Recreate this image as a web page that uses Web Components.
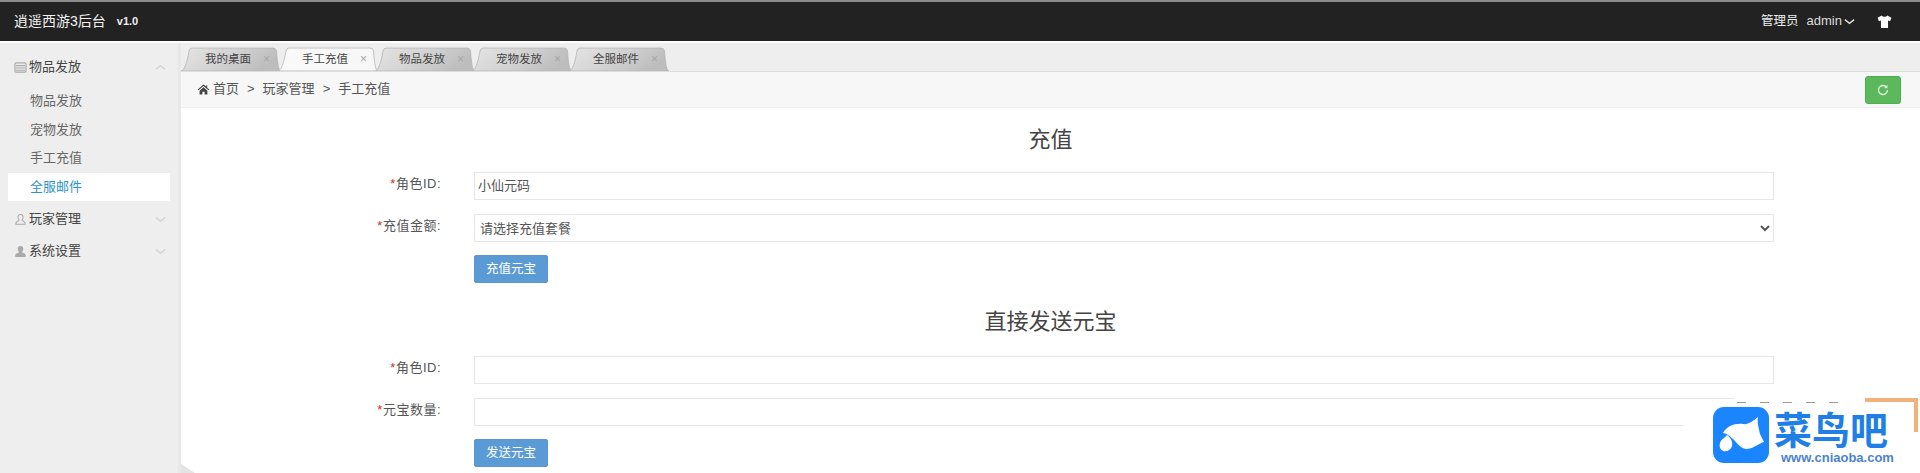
<!DOCTYPE html>
<html lang="zh"><head><meta charset="utf-8"><title>逍遥西游3后台</title>
<style>
html,body{margin:0;height:473px;overflow:hidden;background:#fff}
body{font:13px/1.4 "Liberation Sans","Noto Sans CJK SC",sans-serif;color:#555}
</style></head><body>
<admin-app></admin-app>
<script>
const FONT='"Liberation Sans","Noto Sans CJK SC",sans-serif';
const ICONS={
 list:'<path d="M1 3.5Q1 2 2.5 2h9Q13 2 13 3.5v7q0 1.500-1.500 1.500h-9Q1 12 1 10.500zM2 5h10M2 7.500h10M2 10h10" fill="none" stroke="currentColor" stroke-width="1.200"/>',
 userO:'<path d="M7 1.500a2.800 3.200 0 0 1 2.800 3.200c0 1.400-.7 2.500-1.300 3 0 .8 3.500 1.300 3.500 3.300v1H2v-1c0-2 3.500-2.500 3.500-3.300-.6-.5-1.300-1.600-1.300-3A2.800 3.200 0 0 1 7 1.500z" fill="none" stroke="currentColor" stroke-width="1.100"/>',
 user:'<path d="M7 1a3 3.400 0 0 1 3 3.400c0 1.500-.7 2.700-1.400 3.200 0 .9 4 1.400 4 3.500V13H1.400v-1.900c0-2.100 4-2.600 4-3.500C4.700 7.100 4 5.900 4 4.400A3 3.400 0 0 1 7 1z" fill="currentColor"/>',
 up:'<path d="M2 9l5-4 5 4" fill="none" stroke="currentColor" stroke-width="1.600"/>',
 down:'<path d="M2 5l5 4 5-4" fill="none" stroke="currentColor" stroke-width="1.600"/>',
 home:'<path d="M7 1.500L.8 7l.8.9L7 3.200l5.400 4.700.8-.9-2.200-1.900V2.200H10.300v1.500zM2.800 8.300V12.500h3V9.300h2.400v3.200h3V8.300L7 4.600z" fill="currentColor"/>',
 shirt:'<path d="M4.500 1.500L.5 3.500l1.300 3.200 1.900-.7V13h6.600V6l1.900.7 1.300-3.200-4-2C9 3 5 3 4.500 1.500z" fill="currentColor"/>',
 refresh:'<path d="M10.600 4.300A4.500 4.500 0 1 0 11.500 7" fill="none" stroke="currentColor" stroke-width="1.400"/><path d="M11.500 1.800v3.400H8.100z" fill="currentColor"/>'
};
function def(name,css,html){
 class E extends HTMLElement{
  constructor(){super();this.attachShadow({mode:'open'});}
  connectedCallback(){const src=typeof html==='function'?html(this):html;
   this.shadowRoot.innerHTML='<style>'+css+'</style>'+src;}
 }
 customElements.define(name,E);
}
def('ui-icon',':host{display:inline-flex;width:14px;height:14px;flex:none}svg{width:100%;height:100%;display:block}',
 el=>'<svg viewBox="0 0 14 14">'+(ICONS[el.getAttribute('name')]||'')+'</svg>');

def('top-bar',`:host{display:flex;align-items:center;height:39px;margin-top:2px;background:#222;color:#eee;box-shadow:0 -2px 0 #8c8c8c;padding:0 0 0 14px}
 .t{font-size:14px;color:#f2f2f2}.v{font-size:11px;font-weight:700;margin-left:11px;color:#eee}.sp{flex:1}
 .r{font-size:12.500px;color:#eee}.a{margin-left:8px;font-size:13px;color:#ddd}
 .c{width:13px;height:13px;color:#ddd;margin-left:1px}.s{width:15px;height:15px;color:#fff;margin:0 28px 0 21px}`,
 `<span class="t">逍遥西游3后台</span><span class="v">v1.0</span><span class="sp"></span>
  <span class="r">管理员</span><span class="a">admin</span><ui-icon class="c" name="down"></ui-icon><ui-icon class="s" name="shirt"></ui-icon>`);

def('side-group',`:host{display:block}
 .h{display:flex;align-items:center;height:var(--h,32px);padding-left:14px;color:#444;font-size:13px}
 ui-icon{color:#aaa;width:13px;height:13px;margin-right:2px}
 .n{flex:1}.ch{color:#d4d4d4;margin-right:11px}
 .b{display:block}`,
 el=>`<div class="h"><ui-icon name="${el.getAttribute('icon')}"></ui-icon><span class="n">${el.getAttribute('label')}</span><ui-icon class="ch" name="${el.hasAttribute('open')?'up':'down'}"></ui-icon></div><div class="b"><slot></slot></div>`);
def('side-link',`:host{display:block;height:28.500px;line-height:28.500px;margin:0 8px;padding-left:22px;font-size:13px;color:#666}
 :host([active]){background:#fff;color:#2a92c9}`,'<slot></slot>');
def('side-bar',`:host{display:block;width:178px;flex:none;background:#eee;border-right:3px solid #e8e8e8;padding-top:4px;box-sizing:content-box}`,
 `<side-group style="--h:40px" icon="list" label="物品发放" open>
   <side-link>物品发放</side-link><side-link>宠物发放</side-link><side-link>手工充值</side-link><side-link active>全服邮件</side-link>
  </side-group>
  <side-group icon="userO" label="玩家管理" style="margin-top:2px"></side-group>
  <side-group icon="user" label="系统设置"></side-group>`);

def('tab-item',`:host{display:flex;align-items:center;position:relative;width:100px;height:24px;margin-right:-3px;font-size:11.500px;color:#444;flex:none}
 svg{position:absolute;inset:0;width:100%;height:100%}
 .t{position:relative;margin-left:24px;width:46px;white-space:nowrap}
 .x{position:relative;margin-left:12px;font-size:12px;color:#a6a6a6;line-height:1}`,
 el=>{const a=el.hasAttribute('active');const id='g'+(a?'a':'i');
 return `<svg viewBox="0 0 100 24" preserveAspectRatio="none"><defs><linearGradient id="${id}" x1="0" x2="1" y1="0" y2="0.300">${a?'<stop stop-color="#fafafa"/><stop offset="1" stop-color="#f7f7f7"/>':'<stop stop-color="#e4e4e4"/><stop offset=".5" stop-color="#d4d4d4"/><stop offset="1" stop-color="#bdbdbd"/>'}</linearGradient></defs><path d="M0 24C3 24 6 16 8 4Q8.500 1 11 1H92Q95 1 95.500 4C96.500 16 97.500 24 100 24Z" fill="url(#${id})" stroke="#b5b5b5" stroke-width=".8"/></svg><span class="t"><slot></slot></span><span class="x">×</span>`});
def('tab-strip',`:host{display:flex;align-items:flex-end;height:28px;background:#eee;border-bottom:1px solid #ddd;box-sizing:content-box}`,
 `<tab-item>我的桌面</tab-item><tab-item active>手工充值</tab-item><tab-item>物品发放</tab-item><tab-item>宠物发放</tab-item><tab-item>全服邮件</tab-item>`);

def('crumb-bar',`:host{display:flex;align-items:center;height:35px;background:#f7f7f7;border-bottom:1px solid #eee;padding-left:16px;font-size:13px;color:#555}
 .h{width:13px;height:13px;color:#444;margin-right:3px}.s{margin:0 8px}.sp{flex:1}
 button{display:flex;align-items:center;justify-content:center;width:36px;height:28px;margin-right:19px;padding:0;border:1px solid #4cae4c;border-radius:3px;background:#5cb85c;color:#d8f0d8}
 button ui-icon{width:14px;height:14px}`,
 `<ui-icon class="h" name="home"></ui-icon><span>首页</span><span class="s">&gt;</span><span>玩家管理</span><span class="s">&gt;</span><span>手工充值</span><span class="sp"></span><button aria-label="刷新"><ui-icon name="refresh"></ui-icon></button>`);

def('form-row',`:host{display:grid;grid-template-columns:260px 1300px;column-gap:33px;align-items:center;margin-bottom:14px}
 .l{text-align:right;font-size:13px;color:#555;letter-spacing:.5px;padding-bottom:3px}.l b{font-weight:400;color:#c9302c}`,
 el=>`<div class="l"><b>*</b>${el.getAttribute('label')}</div><div><slot></slot></div>`);
def('text-box',`:host{display:block;height:28px;box-sizing:border-box;border:1px solid #e5e6e7;background:#fff;padding:0 3px;line-height:26px;font-size:13px;color:#555}`,'<slot></slot>');
def('select-box',`:host{display:block}select{display:block;width:100%;height:28px;box-sizing:border-box;border:1px solid #e5e6e7;background:#fff;padding:0 1px;font:13px ${FONT};color:#555;border-radius:0}`,
 el=>`<select><option>${el.getAttribute('placeholder')}</option></select>`);
def('blue-btn',`:host{display:inline-block;width:74px;height:28px;box-sizing:border-box;line-height:26px;text-align:center;background:#5b9bd5;border:1px solid #5a95cf;border-radius:2px;color:#fff;font-size:12.500px}`,'<slot></slot>');
def('form-title',`:host{display:block;text-align:center;height:32px;line-height:32px;font-size:22px;color:#444;margin-bottom:16px}`,'<slot></slot>');
def('btn-row',`:host{display:block;height:28px;padding-left:293px}`,'<slot></slot>');

def('wm-badge',`:host{position:absolute;right:0;bottom:0;width:237px;height:75px;font-family:${FONT}}
 .bg{position:absolute;inset:0;background:#fff;clip-path:polygon(52px 0,100% 0,100% 100%,0 100%,0 1px,52px 1px)}
 .dash{position:absolute;left:54px;top:4px;width:113px;height:1px;background:repeating-linear-gradient(90deg,#999 0 9px,transparent 9px 23px)}
 .cor{position:absolute;left:182px;top:0;width:53px;height:34px;border-top:4px solid #f0b27a;border-right:4px solid #f0b27a;box-sizing:border-box}
 .logo{position:absolute;left:30px;top:9px;width:56px;height:56px}
 .cn{position:absolute;left:91px;top:9px;font:700 38px/42px "Noto Sans CJK SC",sans-serif;color:#1f7fe6;white-space:nowrap}
 .en{position:absolute;left:98px;top:52px;font:700 13px/16px ${FONT};color:#4d82cf;white-space:nowrap}`,
 `<div class="bg"></div><div class="dash"></div><div class="cor"></div>
  <svg class="logo" viewBox="0 0 56 56"><rect width="56" height="56" rx="11" fill="#1a85ff"/>
  <path d="M10 26C14 19 22 16 30 17C35 18 40 14 45 10C44 16 46 22 47 27L51 35C46 36 42 41 34 42C28 42 24 36 20 32C17 29 13 26 10 26Z" fill="#fff"/>
  <path d="M14 28C18 31 20 35 19 39C18 43 14 45 10.500 44C7 43 6 39 7 36C8 32 12 31 14 28Z" fill="#fff"/></svg>
  <span class="cn">菜鸟吧</span><span class="en">www.cniaoba.com</span>`);

def('recharge-form',`:host{display:block;padding-top:16px;background:#fff}
 .second{margin-top:23px;margin-bottom:18px}
 .tight{margin-bottom:13px}`,
 `<form-title>充值</form-title>
  <form-row label="角色ID:"><text-box>小仙元码</text-box></form-row>
  <form-row class="tight" label="充值金额:"><select-box placeholder="请选择充值套餐"></select-box></form-row>
  <btn-row><blue-btn>充值元宝</blue-btn></btn-row>
  <form-title class="second">直接发送元宝</form-title>
  <form-row label="角色ID:"><text-box></text-box></form-row>
  <form-row class="tight" label="元宝数量:"><text-box></text-box></form-row>
  <btn-row><blue-btn>发送元宝</blue-btn></btn-row>`);

def('admin-app',`:host{display:flex;flex-direction:column;height:473px;overflow:hidden;position:relative}
 .body{display:flex;flex:1;min-height:0;border-top:2px solid #fff}
 .main{flex:1;min-width:0;display:flex;flex-direction:column;position:relative}
 .tri{position:absolute;left:0;bottom:0;width:0;height:0;border-left:14px solid #e4e4e4;border-top:9px solid transparent}`,
 `<top-bar></top-bar><div class="body"><side-bar></side-bar><div class="main"><tab-strip></tab-strip><crumb-bar></crumb-bar><recharge-form></recharge-form><div class="tri"></div></div></div><wm-badge></wm-badge>`);
</script>
</body></html>
